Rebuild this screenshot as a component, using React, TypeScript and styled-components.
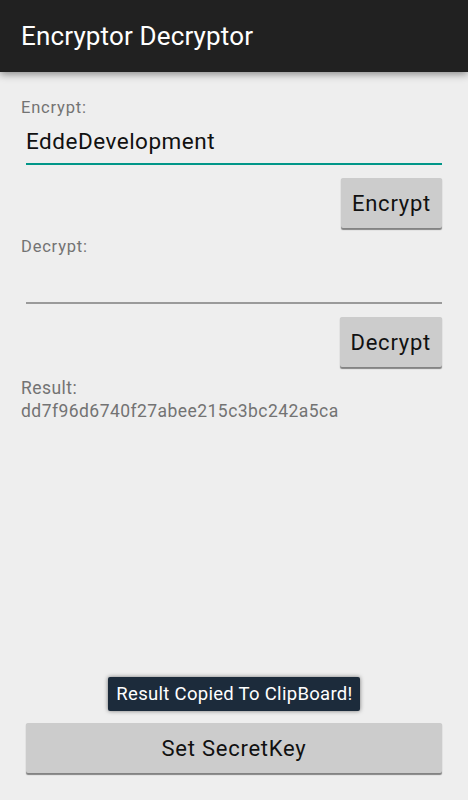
import React from 'react';
import styled, { createGlobalStyle } from 'styled-components';

const GlobalStyle = createGlobalStyle`
  html, body {
    margin: 0;
    padding: 0;
    background: #eeeeee;
    font-family: Roboto, 'Noto Sans', sans-serif;
  }
  * {
    box-sizing: border-box;
  }
`;

const Screen = styled.div`
  display: flex;
  flex-direction: column;
  height: 800px;
  background: #eeeeee;
`;

const AppBar = styled.header`
  height: 72px;
  flex-shrink: 0;
  display: flex;
  align-items: center;
  padding-left: 21px;
  background: #212121;
  color: #ffffff;
  font-size: 26px;
  letter-spacing: 0.15px;
  box-shadow: 0 2px 8px rgba(0, 0, 0, 0.45);
  position: relative;
  z-index: 1;
`;

const Content = styled.main`
  flex: 1;
  display: flex;
  flex-direction: column;
  padding: 25px 26px 27px 21px;
`;

const Label = styled.div`
  font-size: 16.5px;
  letter-spacing: 0.8px;
  color: #737373;
  line-height: 21px;
`;

const Field = styled.div<{ focused?: boolean }>`
  margin-left: 5px;
  height: 47px;
  display: flex;
  align-items: center;
  font-size: 22.5px;
  letter-spacing: 0.5px;
  color: #111111;
  border-bottom: 2px solid ${({ focused }) => (focused ? '#009688' : '#9a9a9a')};
`;

const ButtonRow = styled.div`
  display: flex;
  justify-content: flex-end;
  margin-top: 13px;
`;

const GrayButton = styled.button<{ wide?: boolean }>`
  height: 50px;
  padding: 0 11px;
  width: ${({ wide }) => (wide ? '100%' : 'auto')};
  border: none;
  border-radius: 2px;
  background: #cccccc;
  color: #111111;
  font-family: Roboto, 'Noto Sans', sans-serif;
  font-size: 22px;
  letter-spacing: 0.75px;
  box-shadow: 0 1.5px 1px rgba(0, 0, 0, 0.45);
`;

const Section = styled.section<{ gap: number }>`
  margin-top: ${({ gap }) => gap}px;
`;

const ResultText = styled.div`
  font-size: 17.5px;
  letter-spacing: 0.45px;
  color: #737373;
  line-height: 23px;
`;

const Bottom = styled.div`
  margin-top: auto;
  display: flex;
  flex-direction: column;
  align-items: center;
  padding-left: 5px;
`;

const Toast = styled.div`
  background: #1c2b3b;
  color: #ffffff;
  font-size: 18.5px;
  letter-spacing: 0.3px;
  height: 34px;
  padding: 0 7px 0 8px;
  display: flex;
  align-items: center;
  border-radius: 2px;
  box-shadow: 0 0 4px rgba(0, 0, 0, 0.5);
  margin-bottom: 12px;
`;

const App: React.FC = () => {
  return (
    <>
      <GlobalStyle />
      <Screen>
        <AppBar>Encryptor Decryptor</AppBar>
        <Content>
          <Label>Encrypt:</Label>
          <Field focused>EddeDevelopment</Field>
          <ButtonRow>
            <GrayButton>Encrypt</GrayButton>
          </ButtonRow>
          <Section gap={8}>
            <Label>Decrypt:</Label>
            <Field />
          </Section>
          <ButtonRow>
            <GrayButton>Decrypt</GrayButton>
          </ButtonRow>
          <Section gap={10}>
            <ResultText>Result:</ResultText>
            <ResultText>dd7f96d6740f27abee215c3bc242a5ca</ResultText>
          </Section>
          <Bottom>
            <Toast>Result Copied To ClipBoard!</Toast>
            <GrayButton wide>Set SecretKey</GrayButton>
          </Bottom>
        </Content>
      </Screen>
    </>
  );
};

export default App;
